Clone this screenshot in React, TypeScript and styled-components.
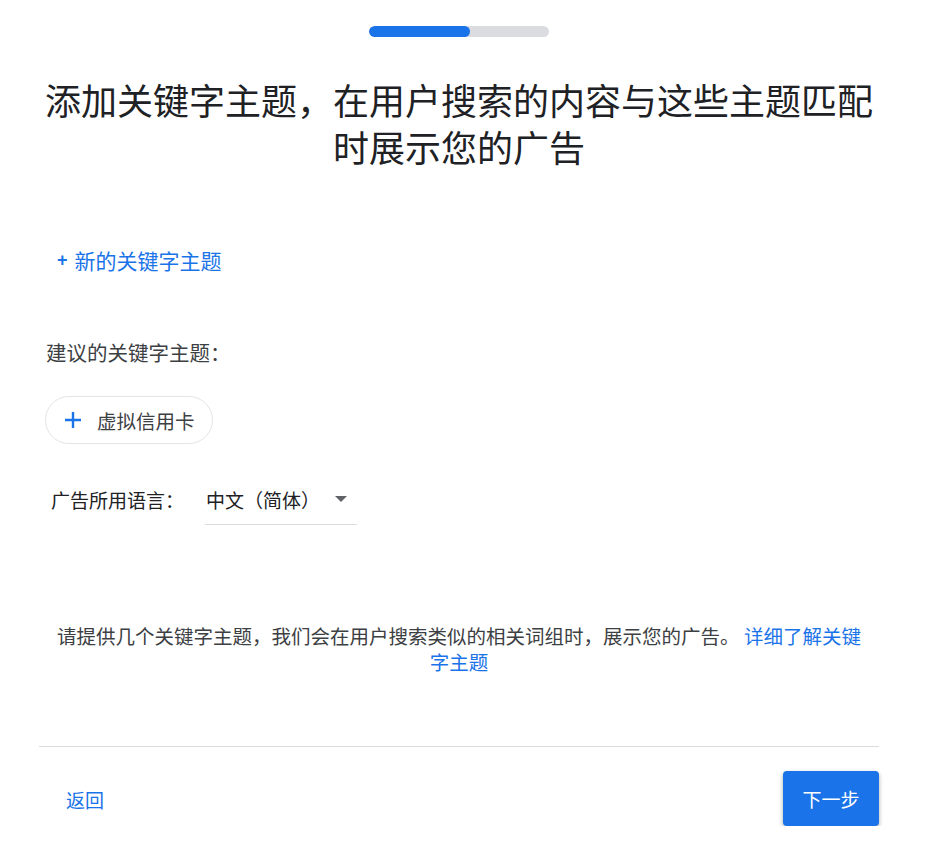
import React from "react";
import styled, { createGlobalStyle } from "styled-components";

const GlobalStyle = createGlobalStyle`
  body {
    margin: 0;
    background: #fff;
    font-family: "Noto Sans CJK SC", "Noto Sans", "Liberation Sans", sans-serif;
    color: #3c4043;
  }
`;

const Page = styled.div`
  width: 840px;
  margin-left: 39px;
  display: flex;
  flex-direction: column;
`;

const Progress = styled.div`
  align-self: center;
  margin-top: 26px;
  width: 180px;
  height: 11px;
  border-radius: 6px;
  background: #dadce0;
  overflow: hidden;
`;

const ProgressFill = styled.div`
  height: 100%;
  border-radius: 6px;
  background: #1a73e8;
`;

const Title = styled.h1`
  margin: 39px 0 0;
  font-size: 36px;
  line-height: 47px;
  font-weight: 400;
  color: #202124;
  text-align: center;
`;

const AddLink = styled.a`
  align-self: flex-start;
  margin: 77px 0 0 18px;
  display: flex;
  align-items: center;
  gap: 7px;
  font-size: 21px;
  line-height: 26px;
  color: #1a73e8;
  cursor: pointer;
`;

const PlusMark = styled.span`
  font-size: 18px;
  font-weight: 700;
  font-family: "Liberation Sans", sans-serif;
`;

const Label = styled.div`
  margin: 66px 0 0 7px;
  font-size: 20.5px;
  line-height: 26px;
  color: #3c4043;
`;

const Chip = styled.button`
  align-self: flex-start;
  margin: 31px 0 0 6px;
  width: 168px;
  height: 48px;
  border: 1px solid #e4e5e8;
  border-radius: 24px;
  background: #fff;
  display: flex;
  align-items: center;
  gap: 15px;
  padding: 0 0 0 18px;
  font-family: inherit;
  font-size: 19.5px;
  color: #3c4043;
  cursor: pointer;
`;

const LangRow = styled.div`
  margin: 36px 0 0 12px;
  display: flex;
  align-items: flex-start;
  gap: 21px;
  height: 46px;
`;

const LangLabel = styled.span`
  font-size: 19px;
  line-height: 40px;
  color: #202124;
`;

const Select = styled.div`
  width: 152px;
  height: 45px;
  border-bottom: 1px solid #dadce0;
  display: flex;
  align-items: flex-start;
  justify-content: space-between;
  padding: 0 10px 0 1px;
  box-sizing: border-box;
  font-size: 19px;
  line-height: 40px;
  color: #202124;
`;

const Caret = styled.span`
  margin-top: 16px;
  width: 0;
  height: 0;
  border-left: 6px solid transparent;
  border-right: 6px solid transparent;
  border-top: 6px solid #5f6368;
`;

const Help = styled.p`
  align-self: center;
  margin: 97px 0 0;
  max-width: 812px;
  font-size: 19.5px;
  line-height: 26px;
  text-align: center;
  color: #3c4043;
`;

const HelpLink = styled.a`
  color: #1a73e8;
  cursor: pointer;
`;

const Divider = styled.hr`
  margin: 71px 0 0;
  border: 0;
  border-top: 1px solid #dadce0;
`;

const Footer = styled.div`
  margin-top: 24px;
  display: flex;
  align-items: center;
  justify-content: space-between;
`;

const BackLink = styled.a`
  margin: 2px 0 0 27px;
  font-size: 19px;
  color: #1a73e8;
  cursor: pointer;
`;

const NextButton = styled.button`
  width: 96px;
  height: 55px;
  border: 0;
  border-radius: 4px;
  background: #1a73e8;
  color: #fff;
  font-family: inherit;
  font-size: 19px;
  box-shadow: 0 2px 4px rgba(60, 64, 67, 0.45);
  cursor: pointer;
`;

const App: React.FC = () => {
  return (
    <>
      <GlobalStyle />
      <Page>
        <Progress>
          <ProgressFill style={{ width: "56%" }} />
        </Progress>
        <Title>添加关键字主题，在用户搜索的内容与这些主题匹配时展示您的广告</Title>

        <AddLink>
          <PlusMark>+</PlusMark>新的关键字主题
        </AddLink>

        <Label>建议的关键字主题：</Label>
        <Chip>
          <svg width="18" height="18" viewBox="0 0 18 18">
            <path d="M9 1v16M1 9h16" stroke="#1a73e8" strokeWidth="2.4" />
          </svg>
          虚拟信用卡
        </Chip>

        <LangRow>
          <LangLabel>广告所用语言：</LangLabel>
          <Select>
            中文（简体）
            <Caret />
          </Select>
        </LangRow>

        <Help>
          请提供几个关键字主题，我们会在用户搜索类似的相关词组时，展示您的广告。{" "}
          <HelpLink>详细了解关键字主题</HelpLink>
        </Help>

        <Divider />
        <Footer>
          <BackLink>返回</BackLink>
          <NextButton>下一步</NextButton>
        </Footer>
      </Page>
    </>
  );
};

export default App;
